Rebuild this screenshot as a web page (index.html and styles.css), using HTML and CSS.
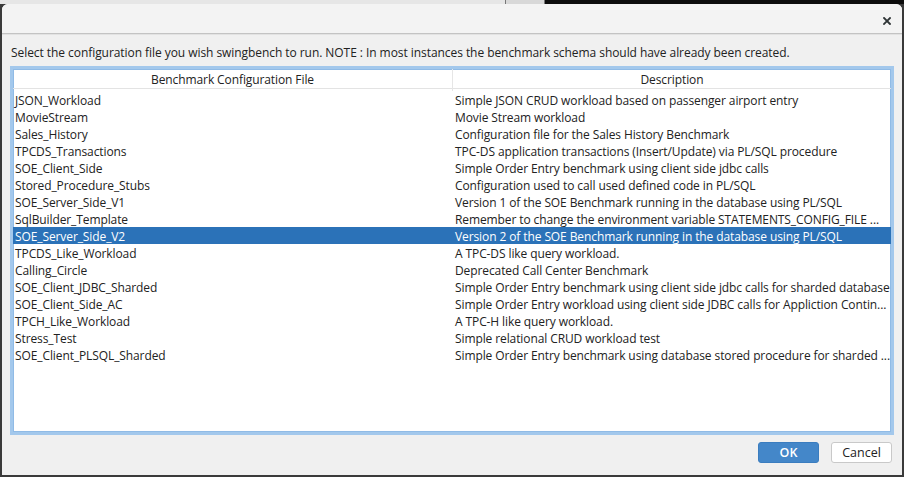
FILE: index.html
```html
<!DOCTYPE html>
<html>
<head>
<meta charset="utf-8">
<title>Select Benchmark</title>
<link rel="stylesheet" href="styles.css">
</head>
<body>
<div class="screen">
  <div class="backdrop">
    <div class="bd-left"></div>
    <div class="bd-tab"></div>
    <div class="bd-right"></div>
  </div>
  <div class="dialog">
    <div class="titlebar">
      <button class="close" aria-label="Close">
        <svg width="8" height="8" viewBox="0 0 8 8"><path d="M1 1 L7 7 M7 1 L1 7" stroke="#2e3436" stroke-width="1.8" stroke-linecap="square" fill="none"/></svg>
      </button>
    </div>
    <div class="content">
      <p class="prompt">Select the configuration file you wish swingbench to run. NOTE : In most instances the benchmark schema should have already been created.</p>
      <div class="table">
        <div class="thead">
          <div class="th">Benchmark Configuration File</div>
          <div class="th">Description</div>
        </div>
        <div class="tbody">
          <div class="row"><div class="td">JSON_Workload</div><div class="td">Simple JSON CRUD workload based on passenger airport entry</div></div>
          <div class="row"><div class="td">MovieStream</div><div class="td">Movie Stream workload</div></div>
          <div class="row"><div class="td">Sales_History</div><div class="td">Configuration file for the Sales History Benchmark</div></div>
          <div class="row"><div class="td">TPCDS_Transactions</div><div class="td">TPC-DS application transactions (Insert/Update) via PL/SQL procedure</div></div>
          <div class="row"><div class="td">SOE_Client_Side</div><div class="td">Simple Order Entry benchmark using client side jdbc calls</div></div>
          <div class="row"><div class="td">Stored_Procedure_Stubs</div><div class="td">Configuration used to call used defined code in PL/SQL</div></div>
          <div class="row"><div class="td">SOE_Server_Side_V1</div><div class="td">Version 1 of the SOE Benchmark running in the database using PL/SQL</div></div>
          <div class="row"><div class="td">SqlBuilder_Template</div><div class="td">Remember to change the environment variable STATEMENTS_CONFIG_FILE ...</div></div>
          <div class="row selected"><div class="td">SOE_Server_Side_V2</div><div class="td">Version 2 of the SOE Benchmark running in the database using PL/SQL</div></div>
          <div class="row"><div class="td">TPCDS_Like_Workload</div><div class="td">A TPC-DS like query workload.</div></div>
          <div class="row"><div class="td">Calling_Circle</div><div class="td">Deprecated Call Center Benchmark</div></div>
          <div class="row"><div class="td">SOE_Client_JDBC_Sharded</div><div class="td">Simple Order Entry benchmark using client side jdbc calls for sharded database</div></div>
          <div class="row"><div class="td">SOE_Client_Side_AC</div><div class="td">Simple Order Entry workload using client side JDBC calls for Appliction Contin...</div></div>
          <div class="row"><div class="td">TPCH_Like_Workload</div><div class="td">A TPC-H like query workload.</div></div>
          <div class="row"><div class="td">Stress_Test</div><div class="td">Simple relational CRUD workload test</div></div>
          <div class="row"><div class="td">SOE_Client_PLSQL_Sharded</div><div class="td">Simple Order Entry benchmark using database stored procedure for sharded ...</div></div>
        </div>
      </div>
      <div class="actions">
        <button class="btn ok">OK</button>
        <button class="btn cancel">Cancel</button>
      </div>
    </div>
  </div>
</div>
</body>
</html>
```

FILE: styles.css
```css
* { box-sizing: border-box; }
html, body { margin: 0; padding: 0; }
body {
  width: 904px;
  height: 477px;
  overflow: hidden;
  background: #3a3a3a;
  font-family: "Open Sans", "Noto Sans", sans-serif;
  font-size: 12px;
  color: #222;
}
.screen {
  width: 904px;
  height: 477px;
  display: flex;
  flex-direction: column;
}
.backdrop {
  display: flex;
  height: 4px;
  flex: none;
}
.bd-left { width: 505px; background: #e6e6e6; }
.bd-tab { width: 40px; background: #d8d8d8; border-left: 1px solid #777; border-right: 1px solid #777; }
.bd-right { flex: 1; background: #0c0c0c; }
.dialog {
  margin-left: 2px;
  width: 900px;
  height: 471px;
  background: #f0f0f0;
  border-radius: 6px 6px 0 0;
  display: flex;
  flex-direction: column;
  overflow: hidden;
}
.titlebar {
  height: 30px;
  flex: none;
  background: #f3f3f3;
  border-bottom: 1px solid #c3c3c3;
  box-shadow: 0 1px 0 #e2e2e2;
  display: flex;
  justify-content: flex-end;
  align-items: flex-start;
}
.close {
  border: 0;
  background: none;
  padding: 0;
  margin: 13px 11px 0 0;
  width: 8px;
  height: 8px;
  display: flex;
}
.content {
  flex: 1;
  display: flex;
  flex-direction: column;
  padding: 11px 8px 0 8px;
}
.prompt {
  margin: 0;
  height: 16px;
  line-height: 16px;
  padding-left: 1px;
  white-space: nowrap;
  letter-spacing: -0.06px;
}
.table {
  margin-top: 5px;
  height: 369px;
  border: 3px solid #a3c8ec;
  box-shadow: inset 0 0 0 1px #90bbe6;
  background: #fff;
  display: flex;
  flex-direction: column;
  letter-spacing: -0.1px;
}
.thead {
  display: grid;
  grid-template-columns: 440px 1fr;
  height: 20px;
  border-bottom: 1px solid #e3e3e3;
  flex: none;
}
.th {
  text-align: center;
  line-height: 22px;
  white-space: nowrap;
}
.th:first-child { border-right: 1px solid #e6e6e6; }
.tbody { padding-top: 2px; }
.row {
  display: grid;
  grid-template-columns: 440px 1fr;
  height: 17px;
}
.td {
  padding-left: 2px;
  height: 17px;
  line-height: 19px;
  white-space: nowrap;
  overflow: hidden;
}
.row.selected { background: #2b72b8; color: #fff; }
.actions {
  display: flex;
  justify-content: flex-end;
  gap: 12px;
  margin-top: 7px;
  padding-right: 2px;
}
.btn {
  width: 61px;
  height: 21px;
  font-family: "Open Sans", "Noto Sans", sans-serif;
  font-size: 12.5px;
  border-radius: 3px;
  padding: 0;
}
.ok {
  background: #4487c9;
  border: 1px solid #3b7dbf;
  color: #fff;
  font-weight: 600;
}
.cancel {
  background: #fff;
  border: 1px solid #c9c9c9;
  color: #222;
}
```
